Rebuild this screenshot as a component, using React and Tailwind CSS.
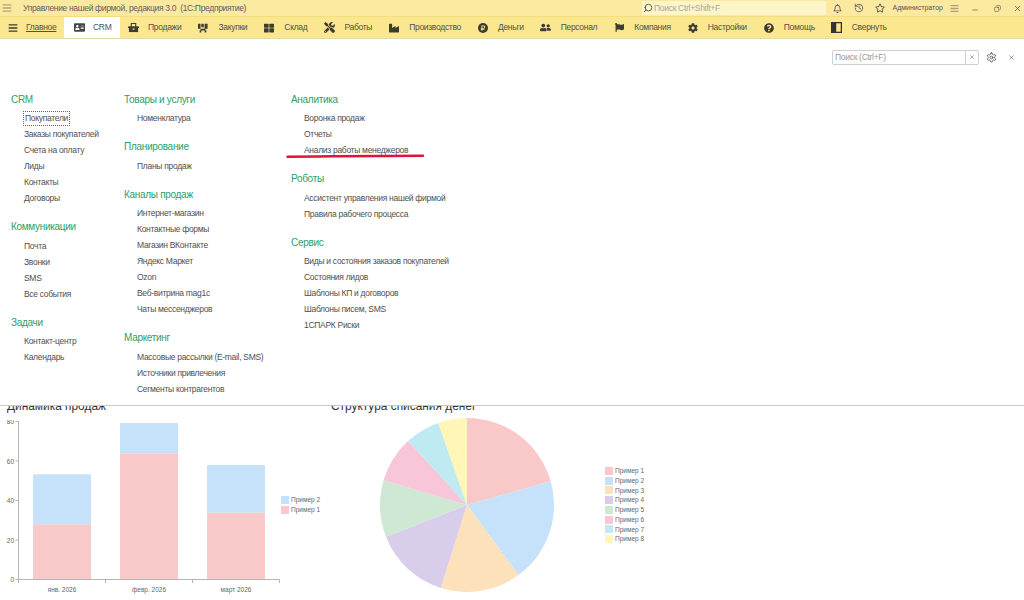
import React from 'react';
import {
  FaAddressCard, FaBars, FaCog, FaFlag, FaIndustry, FaQuestionCircle, FaRegBell, FaRegStar,
  FaRubleSign, FaThLarge, FaTools, FaUserFriends,
} from 'react-icons/fa';
import { LuCopy, LuHistory, LuSearch, LuSettings, LuX, LuMinus } from 'react-icons/lu';

const BasketIcon = () => (
  <svg width="11" height="11" viewBox="0 0 12 12" fill="#3c3c32">
    <path d="M1 5h10v6H1z" />
    <path d="M0 5h12v1.6H0zM3 1h1.2v4H3zM7.8 1H9v4H7.8zM3 1h6v1.2H3z" />
    <path d="M5 7h2v1.4H5z" fill="#fbe78f" />
  </svg>
);

const PurchaseIcon = () => (
  <svg width="10" height="10" viewBox="0 0 12 12" fill="#3c3c32">
    <path d="M0 1h3v6H0zM4 1h3v4H4zM8 1h3.5v6H8zM3 7h6v2H3zM2 9h2v2.5H2zM8 9h2v2.5H8z" />
  </svg>
);

const CollapseIcon = () => (
  <svg width="11" height="11" viewBox="0 0 12 12">
    <rect x="0.7" y="0.7" width="10.6" height="10.6" fill="none" stroke="#333" strokeWidth="1.4" />
    <rect x="0.7" y="0.7" width="5" height="10.6" fill="#333" />
  </svg>
);

const navItems = [
  { label: 'Продажи', icon: <BasketIcon /> },
  { label: 'Закупки', icon: <PurchaseIcon /> },
  { label: 'Склад', icon: <FaThLarge size={10} /> },
  { label: 'Работы', icon: <FaTools size={11} /> },
  { label: 'Производство', icon: <FaIndustry size={10} /> },
  {
    label: 'Деньги',
    icon: (
      <span className="flex h-[10px] w-[10px] items-center justify-center rounded-full bg-[#3c3c32] text-[#fbe78f]">
        <FaRubleSign size={6} />
      </span>
    ),
  },
  { label: 'Персонал', icon: <FaUserFriends size={11} /> },
  { label: 'Компания', icon: <FaFlag size={9} /> },
  { label: 'Настройки', icon: <FaCog size={10} /> },
  { label: 'Помощь', icon: <FaQuestionCircle size={10} /> },
  { label: 'Свернуть', icon: <CollapseIcon /> },
];

const menuColumns = [
  {
    id: 'left',
    width: 'w-[113px]',
    sections: [
      { title: 'CRM', items: ['Покупатели', 'Заказы покупателей', 'Счета на оплату', 'Лиды', 'Контакты', 'Договоры'] },
      { title: 'Коммуникации', items: ['Почта', 'Звонки', 'SMS', 'Все события'] },
      { title: 'Задачи', items: ['Контакт-центр', 'Календарь'] },
    ],
  },
  {
    id: 'middle',
    width: 'w-[167px]',
    sections: [
      { title: 'Товары и услуги', items: ['Номенклатура'] },
      { title: 'Планирование', items: ['Планы продаж'] },
      {
        title: 'Каналы продаж',
        items: ['Интернет-магазин', 'Контактные формы', 'Магазин ВКонтакте', 'Яндекс Маркет', 'Ozon', 'Веб-витрина mag1c', 'Чаты мессенджеров'],
      },
      { title: 'Маркетинг', items: ['Массовые рассылки (E-mail, SMS)', 'Источники привлечения', 'Сегменты контрагентов'] },
    ],
  },
  {
    id: 'right',
    width: 'w-[240px]',
    sections: [
      { title: 'Аналитика', items: ['Воронка продаж', 'Отчеты', 'Анализ работы менеджеров'] },
      { title: 'Роботы', items: ['Ассистент управления нашей фирмой', 'Правила рабочего процесса'] },
      {
        title: 'Сервис',
        items: ['Виды и состояния заказов покупателей', 'Состояния лидов', 'Шаблоны КП и договоров', 'Шаблоны писем, SMS', '1СПАРК Риски'],
      },
    ],
  },
];

const pieColors = ['#f9c9c9', '#c5e2fa', '#fde1bb', '#d9cdec', '#cfe8d3', '#f9c5d8', '#bfeaf1', '#fff6b8'];
const pieEnds = [74.2, 143.7, 197.6, 248.6, 286.6, 317.4, 340.7, 360];

const piePoint = (deg) => {
  const r = (deg * Math.PI) / 180;
  return `${87 + 87 * Math.sin(r)} ${87 - 87 * Math.cos(r)}`;
};

const BarChart = () => (
  <svg width="330" height="180" viewBox="0 0 330 180" className="block">
    {[[33, 58, 474.3, 524.3], [120, 58, 423, 453.3], [207, 58, 465, 512.7]].map(([x, w, top, split]) => (
      <g key={x}>
        <rect x={x} y={top - 420} width={w} height={split - top} fill="#c5e2fa" />
        <rect x={x} y={split - 420} width={w} height={579.3 - split} fill="#f9c9c9" />
      </g>
    ))}
    <path d="M18.5 1v159M18.5 159.5H279.5" stroke="#b5b5b5" fill="none" />
    {[1.5, 41, 80.5, 120, 159.5].map((y) => (
      <path key={y} d={`M15.5 ${y}H18.5`} stroke="#b5b5b5" />
    ))}
    {[18.5, 105.5, 192.5, 279.5].map((x) => (
      <path key={x} d={`M${x} 159.5V163`} stroke="#b5b5b5" />
    ))}
    <g fontSize="6.5" fill="#666" fontFamily="Liberation Sans">
      {[['80', 4], ['60', 43.5], ['40', 83], ['20', 122.5], ['0', 162]].map(([t, y]) => (
        <text key={t} x="14" y={y} textAnchor="end">{t}</text>
      ))}
      <text x="62" y="172" textAnchor="middle">янв. 2026</text>
      <text x="149" y="172" textAnchor="middle">февр. 2026</text>
      <text x="236" y="172" textAnchor="middle">март 2026</text>
    </g>
  </svg>
);

const Legend = ({ items }) => (
  <div className="flex flex-col">
    {items.map(([label, color]) => (
      <div key={label} className="flex h-[9.75px] items-center gap-[2px] text-[6.5px] text-[#666]">
        <span className={`h-[8px] w-[8px] ${color}`} />
        {label}
      </div>
    ))}
  </div>
);

const PieChart = () => (
  <svg width="174" height="174" viewBox="0 0 174 174" className="block">
    {pieEnds.map((end, i) => {
      const start = i === 0 ? 0 : pieEnds[i - 1];
      return (
        <path
          key={end}
          d={`M87 87L${piePoint(start)}A87 87 0 0 1 ${piePoint(end)}Z`}
          fill={pieColors[i]}
        />
      );
    })}
  </svg>
);

export default function App() {
  return (
    <div className="flex h-[600px] w-[1024px] flex-col overflow-hidden bg-white font-['Liberation_Sans',sans-serif] text-[#505050]">
      <div className="flex h-[17px] shrink-0 items-center border-b border-[#f3dd7c] bg-[#fbe9a0]">
        <FaBars size={10} className="ml-[2px] text-[#b5a878]" />
        <span className="ml-[11px] w-[619px] text-[8.5px] tracking-[-0.33px] text-[#606060]">
          Управление нашей фирмой, редакция 3.0&nbsp; (1С:Предприятие)
        </span>
        <div className="flex h-[14px] w-[184px] items-center bg-[#fdf4c8] pl-[1px] text-[8.5px] tracking-[-0.3px] text-[#a8a8a0]">
          <LuSearch size={10} className="mr-[1px] -scale-x-100 text-[#444]" />
          Поиск Ctrl+Shift+F
        </div>
        <FaRegBell size={9} className="ml-[7px] text-[#555]" />
        <LuHistory size={10} className="ml-[11.5px] text-[#555]" />
        <FaRegStar size={10} className="ml-[11px] text-[#555]" />
        <span className="ml-[8px] w-[50px] whitespace-nowrap text-[7px] text-[#555]">Администратор</span>
        <FaBars size={9} className="ml-[7px] text-[#aaa078]" />
        <LuMinus size={8} className="ml-[12.5px] translate-y-[2px] text-[#555]" />
        <LuCopy size={7} className="ml-[15px] -scale-x-100 text-[#555]" />
        <LuX size={9} className="ml-[11.5px] text-[#555]" />
      </div>

      <div className="flex h-[22px] shrink-0 items-stretch border-b border-[#e0d9a8] bg-[#fbe78f] text-[8.5px] tracking-[-0.3px]">
        <div className="flex w-[64px] items-center">
          <FaBars size={10} className="ml-[8px] mr-[8px] text-[#3c3c32]" />
          <span className="underline">Главное</span>
        </div>
        <div className="flex w-[56px] items-center bg-white pl-[10px]">
          <FaAddressCard size={11} className="mr-[8px] text-[#444]" />
          CRM
        </div>
        <div className="flex items-center gap-[16px] pl-[7px]">
          {navItems.map((item) => (
            <div key={item.label} className="flex items-center gap-[9px]">
              <span className="flex w-[12px] justify-center text-[#3c3c32]">{item.icon}</span>
              {item.label}
            </div>
          ))}
        </div>
      </div>

      <div className="relative z-10 h-[367px] shrink-0 border-b border-[#c8c8c8] bg-white">
        <div className="flex h-[26px] items-center justify-end pr-[9px] pt-[10px]">
          <div className="flex h-[15px] w-[147px] items-center justify-between rounded-[2px] border border-[#cfcfcf] pl-[2px] text-[8.5px] tracking-[-0.3px] text-[#9a9a9a]">
            Поиск (Ctrl+F)
            <span className="flex h-full w-[13px] items-center justify-center border-l border-[#cfcfcf]">
              <LuX size={6} className="text-[#555]" />
            </span>
          </div>
          <LuSettings size={11} className="ml-[7px] text-[#555]" />
          <LuX size={7} className="ml-[11px] text-[#555]" />
        </div>

        <div className="flex pl-[11px] pt-[24.5px]">
          {menuColumns.map((column) => (
            <div key={column.id} className={`flex flex-col gap-[10.5px] ${column.width}`}>
              {column.sections.map((section) => (
                <div key={section.title}>
                  <div className="flex h-[21px] items-center pb-[2px] text-[10px] tracking-[-0.3px] text-[#2f9e68]">{section.title}</div>
                  {section.items.map((item) => (
                    <div key={item} className="flex h-[16px] items-center pl-[13px] text-[8.5px] tracking-[-0.3px]">
                      {item === 'Покупатели' ? (
                        <span className="-mx-[1px] border border-dotted border-[#666] px-[1px]">{item}</span>
                      ) : (
                        item
                      )}
                    </div>
                  ))}
                </div>
              ))}
            </div>
          ))}
        </div>

        <svg width="140" height="8" viewBox="0 0 140 8" className="absolute left-[286px] top-[114px]">
          <path d="M1.5 3.8Q60 3 137 2.8" stroke="#e4113c" strokeWidth="2.4" fill="none" strokeLinecap="round" />
        </svg>
      </div>

      <div className="flex flex-1 overflow-hidden">
        <div className="w-[331px] shrink-0">
          <div className="-mt-[7px] pl-[7px] text-[11.9px] leading-[15px] text-[#333]">Динамика продаж</div>
          <div className="relative mt-[6px]">
            <BarChart />
            <div className="absolute left-[281px] top-[75px]">
              <Legend items={[['Пример 2', 'bg-[#c5e2fa]'], ['Пример 1', 'bg-[#f9c9c9]']]} />
            </div>
          </div>
        </div>
        <div className="w-[320px] shrink-0">
          <div className="-mt-[7px] text-[11.9px] leading-[15px] text-[#333]">Структура списания денег</div>
          <div className="flex items-center pl-[49px] pt-[4px]">
            <PieChart />
            <div className="ml-[51px]">
              <Legend
                items={[
                  ['Пример 1', 'bg-[#f9c9c9]'],
                  ['Пример 2', 'bg-[#c5e2fa]'],
                  ['Пример 3', 'bg-[#fde1bb]'],
                  ['Пример 4', 'bg-[#d9cdec]'],
                  ['Пример 5', 'bg-[#cfe8d3]'],
                  ['Пример 6', 'bg-[#f9c5d8]'],
                  ['Пример 7', 'bg-[#bfeaf1]'],
                  ['Пример 8', 'bg-[#fff6b8]'],
                ]}
              />
            </div>
          </div>
        </div>
      </div>
    </div>
  );
}
